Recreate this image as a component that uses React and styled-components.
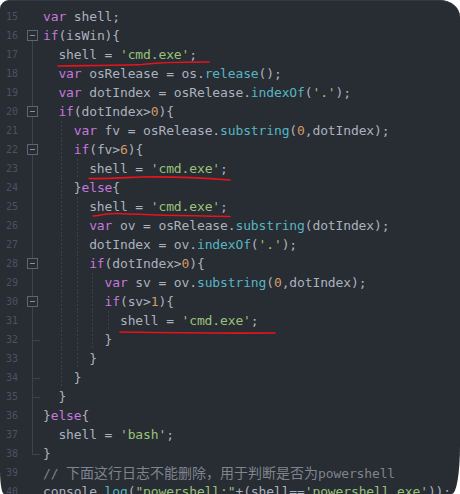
import React from 'react'
import styled, { createGlobalStyle } from 'styled-components'

const GlobalStyle = createGlobalStyle`
  html, body {
    margin: 0;
    padding: 0;
    background: #ffffff;
  }
`

const COLORS = {
  plain: '#abb2bf',
  keyword: '#c678dd',
  string: '#98c379',
  number: '#d19a66',
  func: '#56b6c2',
  comment: '#7f848e',
}

// [line number, indent level, code, fold mark]
const LINES = [
  [15, 0, 'var shell;', 'none'],
  [16, 0, 'if(isWin){', 'start'],
  [17, 1, "shell = 'cmd.exe';", 'line'],
  [18, 1, 'var osRelease = os.release();', 'line'],
  [19, 1, "var dotIndex = osRelease.indexOf('.');", 'line'],
  [20, 1, 'if(dotIndex>0){', 'box'],
  [21, 2, 'var fv = osRelease.substring(0,dotIndex);', 'line'],
  [22, 2, 'if(fv>6){', 'box'],
  [23, 3, "shell = 'cmd.exe';", 'line'],
  [24, 2, '}else{', 'line'],
  [25, 3, "shell = 'cmd.exe';", 'line'],
  [26, 3, 'var ov = osRelease.substring(dotIndex);', 'line'],
  [27, 3, "dotIndex = ov.indexOf('.');", 'line'],
  [28, 3, 'if(dotIndex>0){', 'box'],
  [29, 4, 'var sv = ov.substring(0,dotIndex);', 'line'],
  [30, 4, 'if(sv>1){', 'box'],
  [31, 5, "shell = 'cmd.exe';", 'line'],
  [32, 4, '}', 'tick'],
  [33, 3, '}', 'line'],
  [34, 2, '}', 'tick'],
  [35, 1, '}', 'tick'],
  [36, 0, '}else{', 'line'],
  [37, 1, "shell = 'bash';", 'line'],
  [38, 0, '}', 'end'],
  [39, 0, '// 下面这行日志不能删除，用于判断是否为powershell', 'none'],
  [40, 0, 'console.log("powershell:"+(shell==\'powershell.exe\'));', 'none'],
]

// hand drawn red marks under the lines, y is relative to the row top
const MARKS = {
  17: 'M58 21 C 85 20.5, 120 20.5, 142 19.5 C 156 17.5, 180 17, 209 17',
  23: 'M89 19.5 C 100 20, 118 19, 140 18 C 170 17.5, 205 19, 230 21',
  25: 'M93 19 C 100 18.5, 108 16, 118 16.5 C 150 18, 200 19, 230 19.5',
  31: 'M120 21 C 150 21.5, 210 22.5, 275 22',
}

const TOKEN = /(\/\/.*$)|('[^']*'|"[^"]*")|(\b\d+\b)|(\b(?:var|if|else)\b)|((?<=\.)[A-Za-z_]\w*)|([^'"\w]+|\w+)/g
const CJK = /([\u3000-\u9fff\uff00-\uffef]+)/

function tokenize(src) {
  const out = []
  let m
  TOKEN.lastIndex = 0
  while ((m = TOKEN.exec(src)) !== null) {
    if (m[0] === '') { TOKEN.lastIndex++; continue }
    let kind = 'plain'
    if (m[1]) kind = 'comment'
    else if (m[2]) kind = 'string'
    else if (m[3]) kind = 'number'
    else if (m[4]) kind = 'keyword'
    else if (m[5]) kind = 'func'
    out.push({ kind, text: m[0] })
  }
  return out
}

export default function App() {
  return (
    <>
      <GlobalStyle />
      <Editor>
        {LINES.map(([no, indent, code, fold]) => (
          <Row key={no}>
            <LineNo>{no}</LineNo>
            <FoldCell mark={fold}>
              {(fold === 'start' || fold === 'box') && <FoldBox />}
            </FoldCell>
            <Code>
              {Array.from({ length: indent }).map((_, i) => (
                <Indent key={i} guide={i > 0} />
              ))}
              {tokenize(code).map((t, i) =>
                t.kind === 'comment' ? (
                  <Tok key={i} kind="comment">
                    {t.text.split(CJK).map((part, j) =>
                      CJK.test(part) ? <Cjk key={j}>{part}</Cjk> : part
                    )}
                  </Tok>
                ) : (
                  <Tok key={i} kind={t.kind}>{t.text}</Tok>
                )
              )}
            </Code>
            {MARKS[no] && (
              <Mark width="460" height="26" viewBox="0 0 460 26">
                <path d={MARKS[no]} fill="none" stroke="#e8141c" strokeWidth="1.6" strokeLinecap="round" />
              </Mark>
            )}
          </Row>
        ))}
      </Editor>
    </>
  )
}

const Editor = styled.div`
  width: 460px;
  height: 494px;
  box-sizing: border-box;
  background: #282c33;
  border-top: 1px solid #323845;
  border-radius: 9px 20px 8px 4px / 9px 17px 48px 24px;
  overflow: hidden;
  padding-top: 6px;
`

const Row = styled.div`
  position: relative;
  display: flex;
  height: 19px;
  line-height: 19px;
`

const LineNo = styled.div`
  width: 18px;
  flex: none;
  text-align: right;
  font-family: "DejaVu Sans Mono", monospace;
  font-size: 10px;
  color: #4b5262;
`

const foldBg = (mark) => {
  const c = '#3d434e'
  switch (mark) {
    case 'line':
    case 'box':
      return `linear-gradient(${c},${c}) no-repeat 14px 0 / 1px 100%`
    case 'start':
      return `linear-gradient(${c},${c}) no-repeat 14px 100% / 1px 50%`
    case 'tick':
      return `linear-gradient(${c},${c}) no-repeat 14px 0 / 1px 100%,
        linear-gradient(${c},${c}) no-repeat 14px 10px / 8px 1px`
    case 'end':
      return `linear-gradient(${c},${c}) no-repeat 14px 0 / 1px 11px,
        linear-gradient(${c},${c}) no-repeat 14px 10px / 8px 1px`
    default:
      return 'none'
  }
}

const FoldCell = styled.div`
  width: 25px;
  flex: none;
  display: flex;
  align-items: center;
  background: ${(p) => foldBg(p.mark)};
`

const FoldBox = styled.span`
  position: relative;
  margin-left: 9px;
  width: 9px;
  height: 9px;
  border: 1px solid #5d6473;
  background: #282c33;

  &::after {
    content: '';
    position: absolute;
    left: 2px;
    right: 2px;
    top: 4px;
    height: 1px;
    background: #8b919c;
  }
`

const Code = styled.div`
  flex: 1;
  white-space: pre;
  font-family: "DejaVu Sans Mono", monospace;
  font-size: 13px;
  letter-spacing: -0.13px;
  color: ${COLORS.plain};
`

const Indent = styled.span`
  display: inline-block;
  width: 15.4px;
  height: 19px;
  vertical-align: top;
  background: ${(p) =>
    p.guide
      ? 'repeating-linear-gradient(to bottom, #3b414c 0 2px, transparent 2px 4px) no-repeat 3px 0 / 1px 100%'
      : 'none'};
`

const Tok = styled.span`
  color: ${(p) => COLORS[p.kind]};
`

const Cjk = styled.span`
  font-family: "Noto Sans CJK SC", sans-serif;
  font-size: 14px;
  letter-spacing: 0;
`

const Mark = styled.svg`
  position: absolute;
  left: 0;
  top: 0;
  overflow: visible;
  pointer-events: none;
`
